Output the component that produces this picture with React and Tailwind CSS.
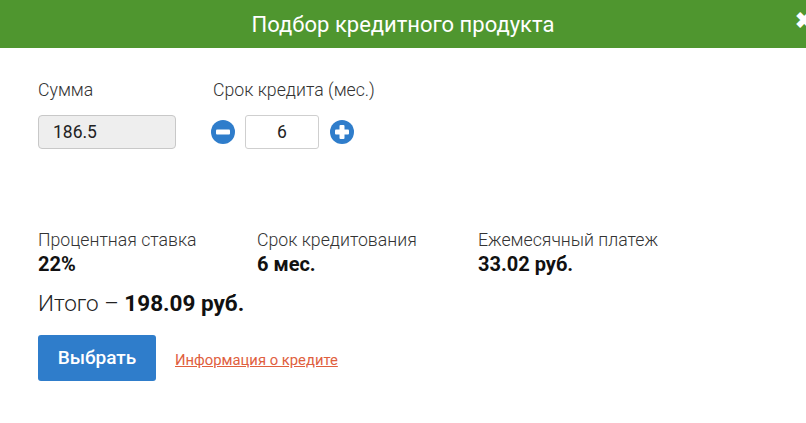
import React from "react";

function MinusIcon() {
  return (
    <svg width="24" height="24" viewBox="0 0 24 24">
      <circle cx="12" cy="12" r="12" fill="#2f7dcb" />
      <rect x="5" y="9.5" width="14" height="5" rx="1" fill="#fff" />
    </svg>
  );
}

function PlusIcon() {
  return (
    <svg width="24" height="24" viewBox="0 0 24 24">
      <circle cx="12" cy="12" r="12" fill="#2f7dcb" />
      <rect x="5" y="9.5" width="14" height="5" rx="1" fill="#fff" />
      <rect x="9.5" y="5" width="5" height="14" rx="1" fill="#fff" />
    </svg>
  );
}

export default function App() {
  return (
    <div className="w-[806px] h-[423px] bg-white overflow-hidden" style={{ fontFamily: "Roboto, 'Noto Sans', sans-serif" }}>
      <div className="h-[48px] bg-[#4f962f] flex items-center justify-center relative">
        <span className="text-white text-[22px] font-normal">Подбор кредитного продукта</span>
        <span className="absolute left-[795px] top-[10px] text-white text-[22px] font-bold leading-none">✖</span>
      </div>
      <div className="pl-[38px] pt-[32px]">
        <div className="flex">
          <div className="w-[173px]">
            <div className="text-[17.7px] font-light text-[#333] leading-[20px]">Сумма</div>
            <div className="mt-[15px] w-[138px] h-[34px] rounded-[4px] border border-[#c8c8c8] bg-[#eeeeee] flex items-center pl-[14px] text-[17.5px] text-[#222]">186.5</div>
          </div>
          <div>
            <div className="pl-[2px] text-[17.7px] font-light text-[#333] leading-[20px]">Срок кредита (мес.)</div>
            <div className="mt-[15px] flex items-center">
              <MinusIcon />
              <div className="ml-[10px] w-[74px] h-[34px] rounded-[3px] border border-[#cfcfcf] bg-white flex items-center justify-center text-[17.5px] text-[#222]">6</div>
              <div className="ml-[11px]"><PlusIcon /></div>
            </div>
          </div>
        </div>
        <div className="flex mt-[81px]">
          <div className="w-[219px]">
            <div className="text-[17.7px] font-light text-[#333] leading-[20px]">Процентная ставка</div>
            <div className="text-[20px] font-bold text-[#111] leading-[24px] mt-[2px]">22%</div>
          </div>
          <div className="w-[221px]">
            <div className="text-[17.7px] font-light text-[#333] leading-[20px]">Срок кредитования</div>
            <div className="text-[20px] font-bold text-[#111] leading-[24px] mt-[2px]">6 мес.</div>
          </div>
          <div>
            <div className="text-[17.7px] font-light text-[#333] leading-[20px]">Ежемесячный платеж</div>
            <div className="text-[20px] font-bold text-[#111] leading-[24px] mt-[2px]">33.02 руб.</div>
          </div>
        </div>
        <div className="mt-[14px] text-[22.5px] leading-[26px] text-[#222]">
          <span className="font-light">Итого – </span>
          <span className="font-bold text-[#111]">198.09 руб.</span>
        </div>
        <div className="mt-[19px] flex items-center">
          <button className="w-[118px] h-[46px] rounded-[3px] bg-[#2f7dcb] text-white text-[19px] font-medium">Выбрать</button>
          <a href="#" className="ml-[19px] mt-[4px] text-[14.8px] text-[#e0603e] underline">Информация о кредите</a>
        </div>
      </div>
    </div>
  );
}
